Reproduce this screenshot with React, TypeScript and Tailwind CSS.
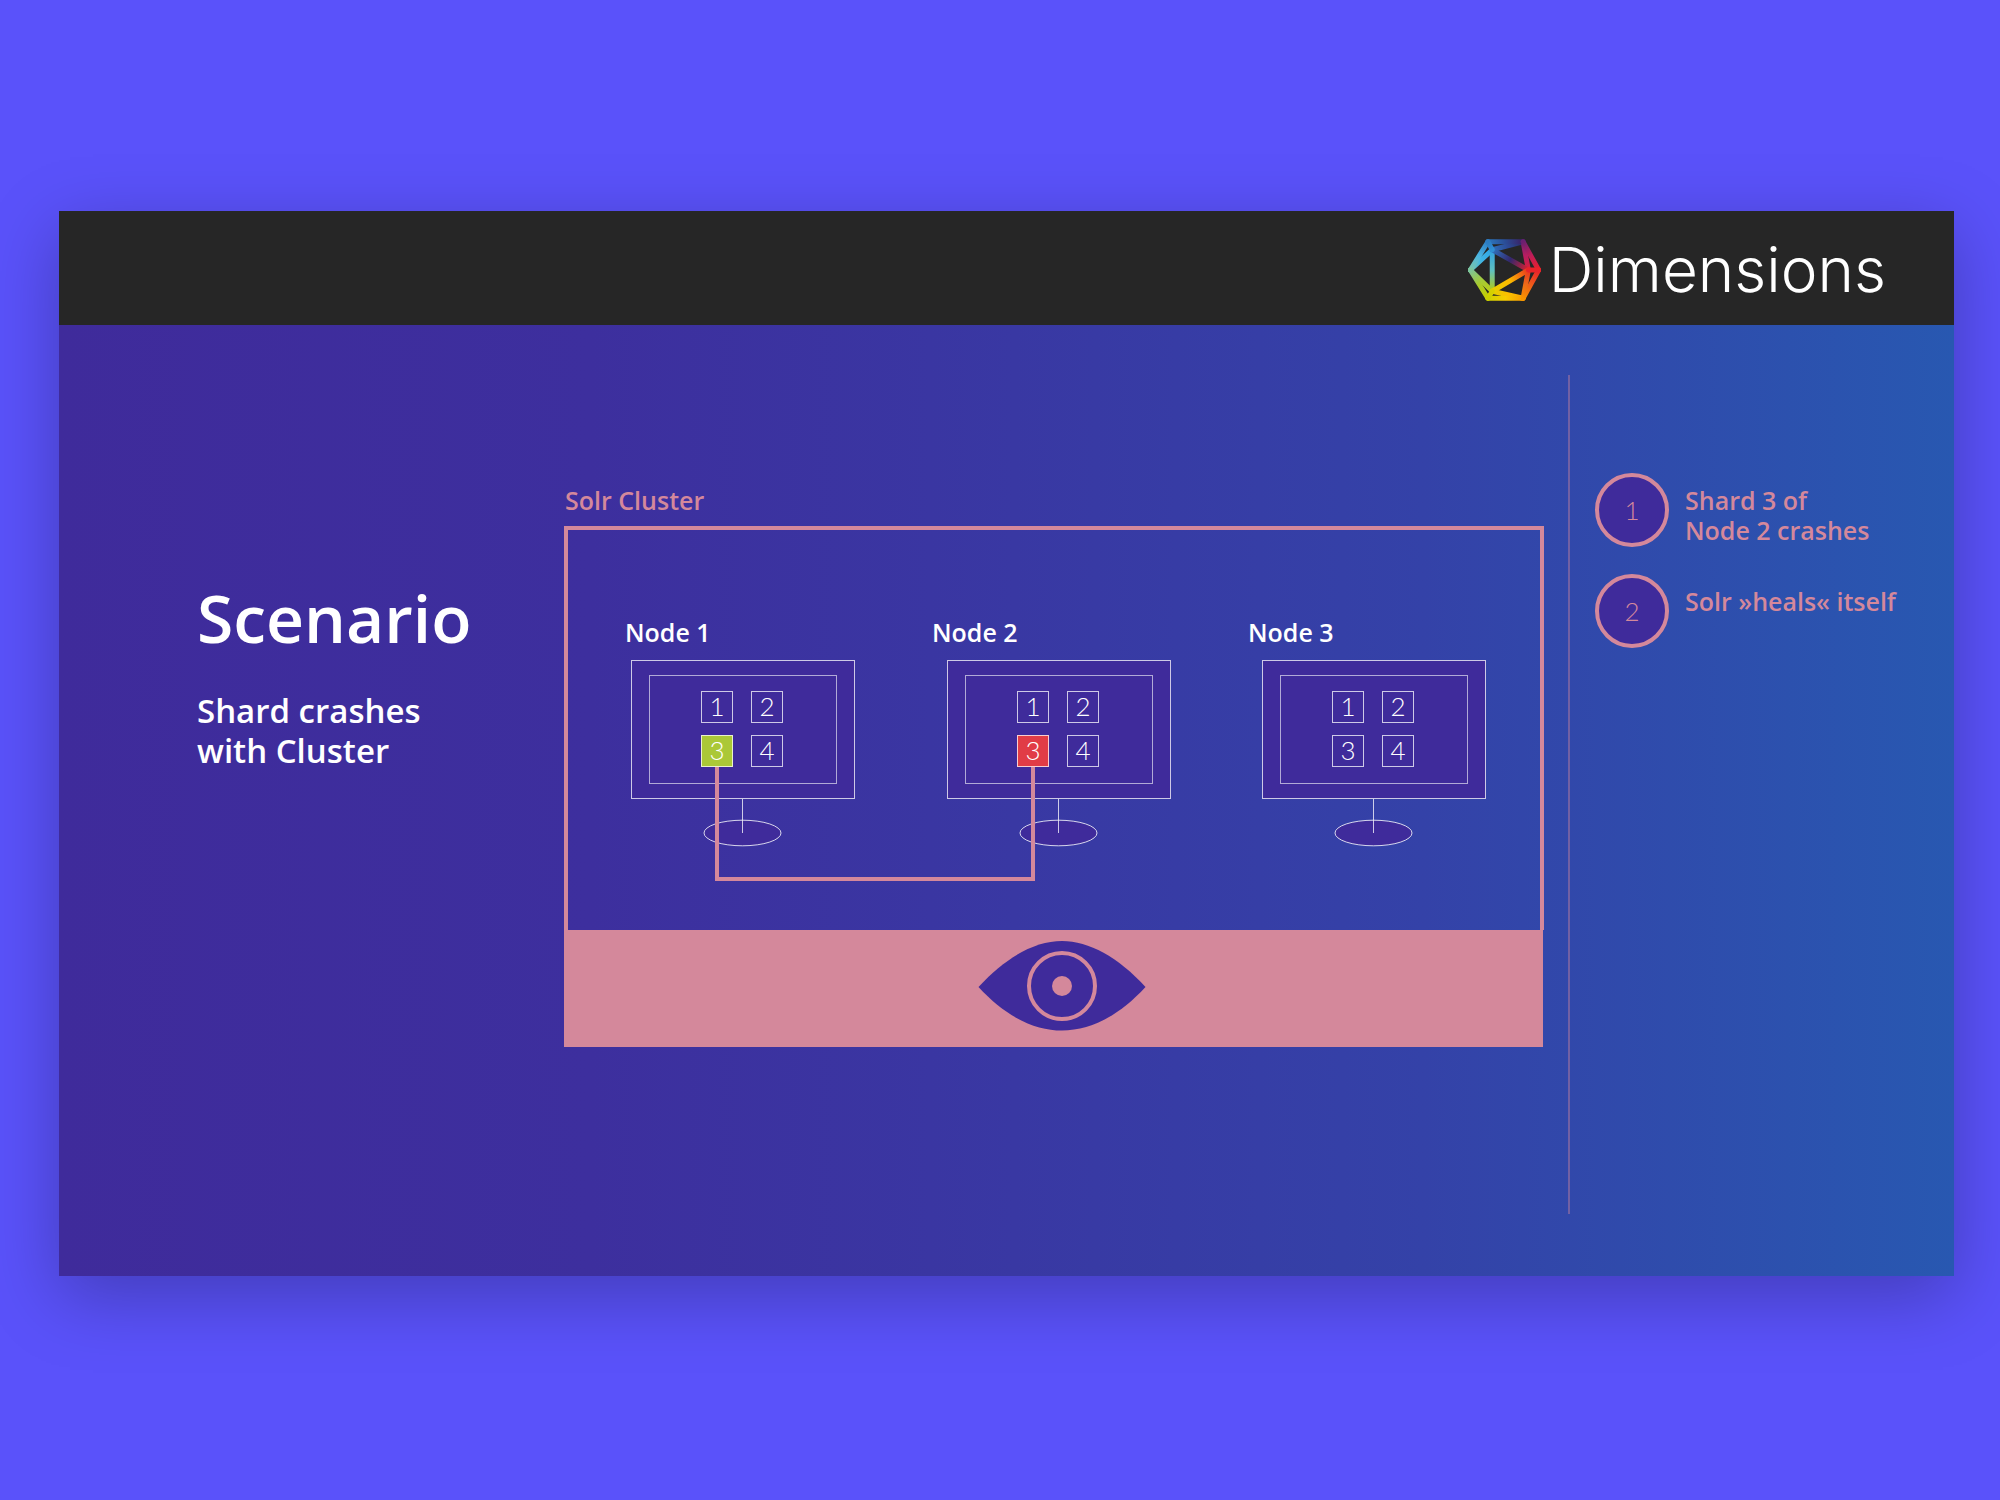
type Point = [number, number];

const L: Point = [7, 93];
const TL: Point = [60, 8];
const TR: Point = [166, 8];
const R: Point = [213, 93];
const BR: Point = [166, 178];
const BL: Point = [60, 178];
const A: Point = [73, 32];
const B: Point = [182, 93];
const C: Point = [73, 157];

const edges: { id: string; from: Point; to: Point; colors: [string, string, string] }[] = [
  { id: "a-tr", from: A, to: TR, colors: ["#2f6fba", "#2c4a96", "#2b2a68"] },
  { id: "a-l", from: A, to: L, colors: ["#2fa4e4", "#3fb4e4", "#6fc2b4"] },
  { id: "c-l", from: C, to: L, colors: ["#b9cc14", "#a5cb38", "#74c29c"] },
  { id: "c-br", from: C, to: BR, colors: ["#e2cd00", "#fcc000", "#f9a800"] },
  { id: "b-tr", from: B, to: TR, colors: ["#dc2038", "#b81d62", "#74206e"] },
  { id: "b-br", from: B, to: BR, colors: ["#e83322", "#ee6a18", "#f59000"] },
  { id: "a-c", from: A, to: C, colors: ["#2fa0e2", "#5fc0c0", "#b4cc10"] },
  { id: "a-b", from: A, to: B, colors: ["#2f74c0", "#33276c", "#e2202e"] },
  { id: "c-b", from: C, to: B, colors: ["#e8d000", "#fbb800", "#e9331f"] },
  { id: "l-tl", from: L, to: TL, colors: ["#7cc4a4", "#4ab6e4", "#2c7cc2"] },
  { id: "l-bl", from: L, to: BL, colors: ["#7cc49c", "#a8ca2c", "#c8d000"] },
  { id: "tl-tr", from: TL, to: TR, colors: ["#2c78be", "#2a4c96", "#3a2062"] },
  { id: "bl-br", from: BL, to: BR, colors: ["#d0d200", "#f8cc00", "#f99a00"] },
  { id: "tr-r", from: TR, to: R, colors: ["#6a2070", "#c01d58", "#e8202a"] },
  { id: "r-br", from: R, to: BR, colors: ["#e8202a", "#ee5a1a", "#f89400"] },
  { id: "a-tl", from: A, to: TL, colors: ["#2f90d6", "#2c84ca", "#2c7cc2"] },
  { id: "c-bl", from: C, to: BL, colors: ["#d8d000", "#d0d000", "#c8d000"] },
  { id: "b-r", from: B, to: R, colors: ["#e8242a", "#e8242a", "#e8242a"] },
];

function DimensionsMark() {
  return (
    <svg viewBox="0 0 220 186" className="h-[62px] w-[73px] shrink-0" aria-hidden="true">
      <defs>
        {edges.map((e) => (
          <linearGradient
            key={e.id}
            id={e.id}
            gradientUnits="userSpaceOnUse"
            x1={e.from[0]}
            y1={e.from[1]}
            x2={e.to[0]}
            y2={e.to[1]}
          >
            <stop offset="0" stopColor={e.colors[0]} />
            <stop offset="0.5" stopColor={e.colors[1]} />
            <stop offset="1" stopColor={e.colors[2]} />
          </linearGradient>
        ))}
      </defs>
      {edges.map((e) => (
        <path
          key={e.id}
          d={`M${e.from[0]} ${e.from[1]}L${e.to[0]} ${e.to[1]}`}
          stroke={`url(#${e.id})`}
          strokeWidth="15"
          strokeLinecap="round"
          fill="none"
        />
      ))}
    </svg>
  );
}

type Shard = { id: number; state?: "ok" | "crashed" };

function ShardCell({ shard }: { shard: Shard }) {
  const fill =
    shard.state === "ok" ? "bg-[#abc837]" : shard.state === "crashed" ? "bg-[#e13c46]" : "bg-transparent";
  return (
    <li
      className={`flex h-8 w-8 items-center justify-center border border-white/75 pb-0.5 font-['Lato',sans-serif] text-[26px] leading-7 font-light ${fill}`}
    >
      {shard.id}
    </li>
  );
}

function Node({ name, shards, indent }: { name: string; shards: Shard[]; indent: string }) {
  return (
    <article className="shrink-0">
      <h3 className="text-[25px] leading-8 font-semibold">{name}</h3>
      <div className={`mt-3 w-56 ${indent}`}>
        <div className="border border-white/75 bg-[#3f2b9b] px-[17px] py-[14px]">
          <ul className="grid grid-cols-[32px_32px] justify-center gap-x-[18px] gap-y-3 border border-white/60 pt-[15px] pr-[2px] pb-4">
            {shards.map((s) => (
              <ShardCell key={s.id} shard={s} />
            ))}
          </ul>
        </div>
        <svg viewBox="0 0 80 48" className="mx-auto h-12 w-20" aria-hidden="true">
          <ellipse cx="39.5" cy="34" rx="38.5" ry="12.8" fill="#3f2b9b" stroke="#fff" strokeOpacity="0.8" />
          <path d="M39.5 0V34" stroke="#fff" strokeOpacity="0.75" />
        </svg>
      </div>
    </article>
  );
}

function Eye() {
  return (
    <svg viewBox="0 0 168 92" className="h-[92px] w-[168px]" role="img" aria-label="Watching">
      <path d="M.5 47C28 17 57 1 84 1S140 17 167.500 47C140 77 111 90.500 84 90.500S28 77 .5 47Z" fill="#3f2b9b" />
      <circle cx="84" cy="46" r="33" fill="none" stroke="#d4889b" strokeWidth="4" />
      <circle cx="84" cy="46" r="10" fill="#d4889b" />
    </svg>
  );
}

function Step({ n, children }: { n: number; children: React.ReactNode }) {
  return (
    <li className="flex gap-4">
      <span className="flex h-[74px] w-[74px] shrink-0 items-center justify-center rounded-full border-4 border-[#d4889b] bg-[#3f2b9b] font-['Lato',sans-serif] text-[26px] leading-8 font-light">
        {n}
      </span>
      <p className="mt-3 text-[25px] leading-[30px] font-semibold whitespace-nowrap">{children}</p>
    </li>
  );
}

export default function App() {
  return (
    <main className="min-h-screen bg-[#5a52fa] pt-[211px] pr-[46px] pb-[224px] pl-[59px] font-['Open_Sans',sans-serif] text-white">
      <section className="shadow-[0_20px_68px_rgba(0,0,0,0.26)]">
        <header className="flex h-[114px] items-center justify-end gap-2 bg-[#262626] pt-1 pr-[68px]">
          <DimensionsMark />
          <span className="font-['Inter',sans-serif] text-[62px] leading-[72px] font-light">Dimensions</span>
        </header>

        <div className="flex min-h-[951px] bg-[linear-gradient(90deg,#3f2b9b_0%,#3d2f9e_28%,#3a36a2_46%,#3442a8_72%,#2f4cac_85%,#2858b1_100%)]">
          <div className="w-[505px] shrink-0 pt-[250px] pl-[138px]">
            <h1 className="text-[66px] leading-[84px] font-semibold">Scenario</h1>
            <p className="mt-8 text-[33px] leading-10 font-semibold">
              Shard crashes
              <br />
              with Cluster
            </p>
          </div>

          <div className="flex min-w-0 flex-1 flex-col pt-[159px]">
            <h2 className="pl-px text-[25px] leading-8 font-semibold text-[#d4889b]">Solr Cluster</h2>
            <div className="relative mt-[10px] flex h-[404px] gap-[77px] border-4 border-b-0 border-[#d4889b] pt-[86px] pl-[57px]">
              <Node
                name="Node 1"
                indent="ml-[6px]"
                shards={[{ id: 1 }, { id: 2 }, { id: 3, state: "ok" }, { id: 4 }]}
              />
              <Node
                name="Node 2"
                indent="ml-[15px]"
                shards={[{ id: 1 }, { id: 2 }, { id: 3, state: "crashed" }, { id: 4 }]}
              />
              <Node name="Node 3" indent="ml-[14px]" shards={[{ id: 1 }, { id: 2 }, { id: 3 }, { id: 4 }]} />
              <div className="absolute top-[237px] left-[147px] h-[114px] w-[320px] border-4 border-t-0 border-[#d4889b]" />
            </div>
            <div className="mr-px flex h-[117px] items-center justify-center bg-[#d4889b] pb-1.5 pl-4">
              <Eye />
            </div>
          </div>

          <aside className="mt-[50px] mb-[62px] ml-6 w-[386px] shrink-0 border-l-2 border-[#d4889b]/40 pt-[98px] pl-[25px] text-[#d4889b]">
            <ol className="flex flex-col gap-[27px]">
              <Step n={1}>
                Shard 3 of
                <br />
                Node 2 crashes
              </Step>
              <Step n={2}>Solr »heals« itself</Step>
            </ol>
          </aside>
        </div>
      </section>
    </main>
  );
}
